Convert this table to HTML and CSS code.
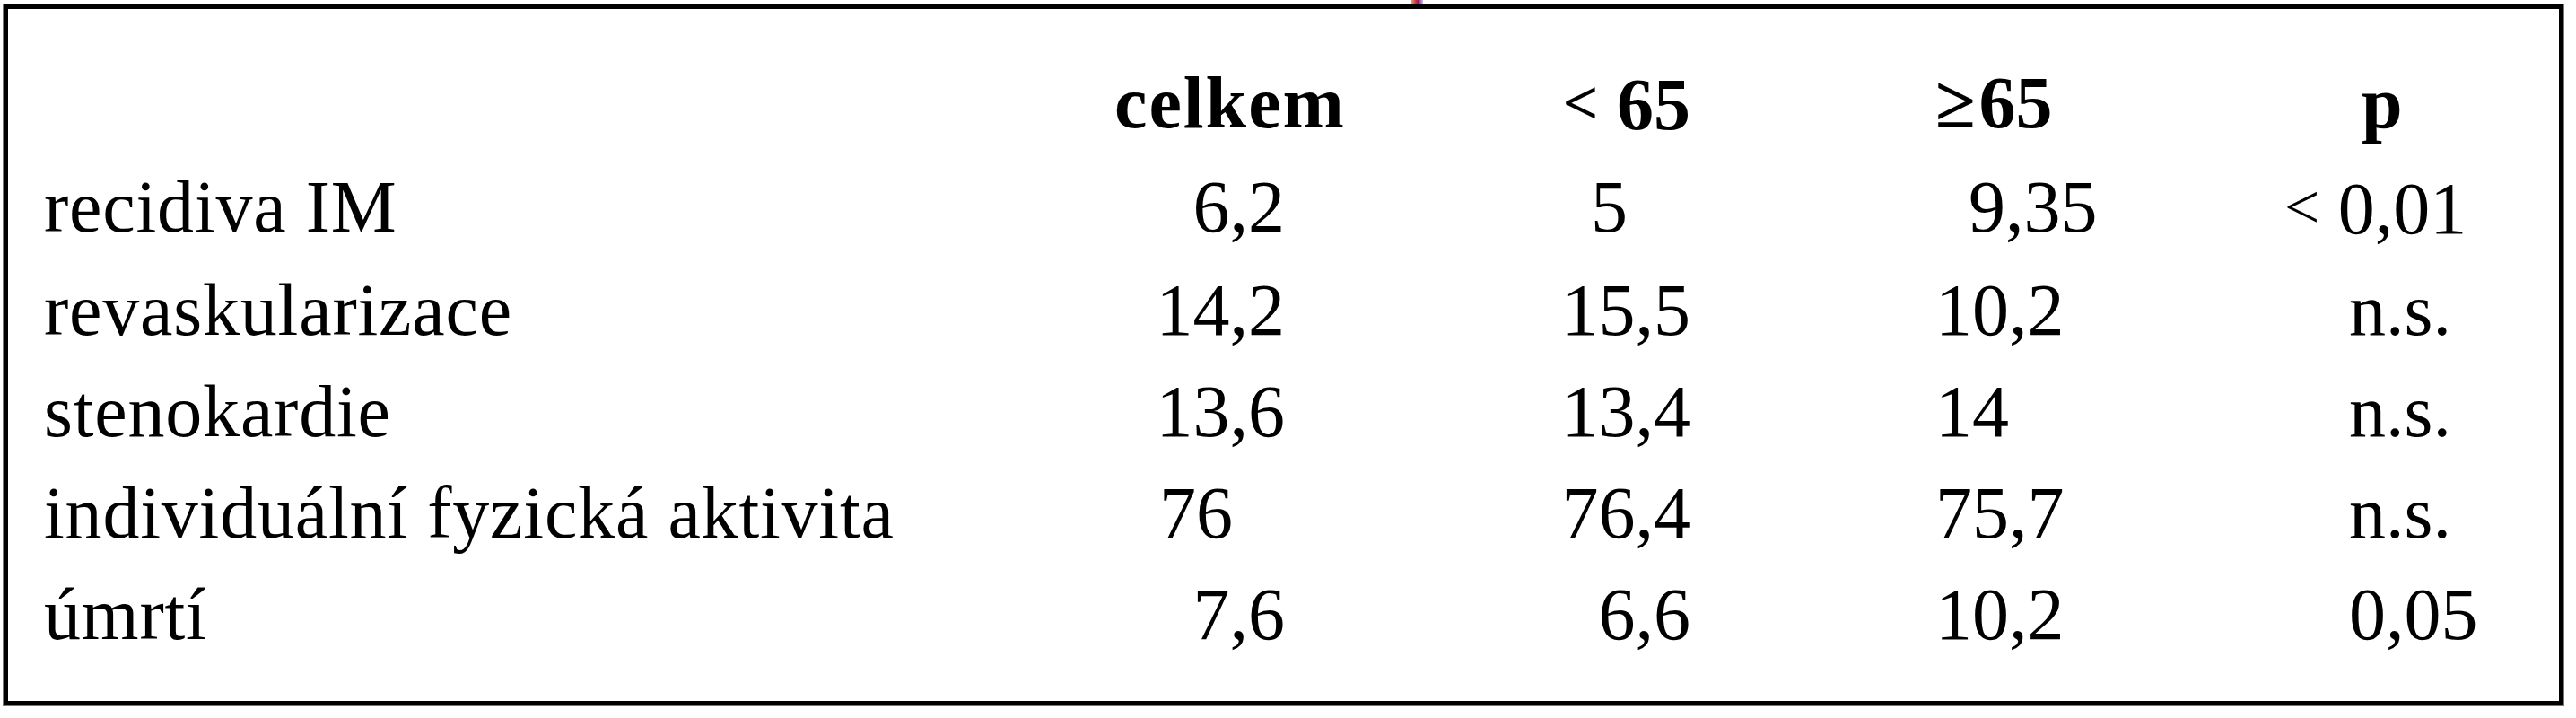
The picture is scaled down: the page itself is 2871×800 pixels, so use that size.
FILE: index.html
```html
<!DOCTYPE html>
<html lang="cs">
<head>
<meta charset="utf-8">
<title>Tabulka</title>
<link rel="stylesheet" href="styles.css">
</head>
<body>
<div class="tick"></div>
<div class="frame">
  <div class="grid">
    <div class="cell hd lab"></div>
    <div class="cell hd c1h">celkem</div>
    <div class="cell hd c2"><span class="lt">&lt;</span> 65</div>
    <div class="cell hd c3 ge">≥ 65</div>
    <div class="cell hd c4h">p</div>

    <div class="cell lab">recidiva IM</div>
    <div class="cell c1">6,2</div>
    <div class="cell c2n">5</div>
    <div class="cell c3w">9,35</div>
    <div class="cell c4w"><span class="lt">&lt;</span> 0,01</div>

    <div class="cell lab">revaskularizace</div>
    <div class="cell c1">14,2</div>
    <div class="cell c2">15,5</div>
    <div class="cell c3">10,2</div>
    <div class="cell c4">n.s.</div>

    <div class="cell lab">stenokardie</div>
    <div class="cell c1">13,6</div>
    <div class="cell c2">13,4</div>
    <div class="cell c3">14</div>
    <div class="cell c4">n.s.</div>

    <div class="cell lab">individuální fyzická aktivita</div>
    <div class="cell c1l">76</div>
    <div class="cell c2">76,4</div>
    <div class="cell c3">75,7</div>
    <div class="cell c4">n.s.</div>

    <div class="cell lab">úmrtí</div>
    <div class="cell c1">7,6</div>
    <div class="cell c2">6,6</div>
    <div class="cell c3">10,2</div>
    <div class="cell c4">0,05</div>
  </div>
</div>
</body>
</html>
```
FILE: styles.css
```css
html, body {
  margin: 0;
  padding: 0;
  background: #ffffff;
}
body {
  position: relative;
  width: 2871px;
  height: 800px;
  overflow: hidden;
  font-family: "Liberation Serif", "Times New Roman", serif;
  color: #000;
}
.tick {
  position: absolute;
  left: 1573px;
  top: 0;
  width: 13px;
  height: 5px;
  background: linear-gradient(to right, #e8a070 0%, #d04a40 30%, #a01060 55%, #9060a0 75%, #c8c0e8 100%);
}
.frame {
  box-sizing: border-box;
  margin: 5px 0 0 4px;
  width: 2853px;
  height: 781px;
  border: 5px solid #000;
  box-shadow: 0 0 0 1px #777;
  padding-top: 47px;
}
.grid {
  display: grid;
  grid-template-columns: 1231px 460px 400px 440px 1fr;
  font-size: 82px;
  line-height: 113px;
  white-space: nowrap;
}
.cell {
  text-align: left;
}
.hd {
  font-weight: bold;
  line-height: 115px;
}
.lab {
  padding-left: 40px;
  letter-spacing: 0.8px;
}
.lt {
  font-size: 0.85em;
  vertical-align: 6px;
}
.ge {
  word-spacing: -17px;
}
.c1 { text-align: right; padding-right: 268px; }
.c1h { padding-left: 2px; letter-spacing: 2px; }
.c1l { padding-left: 52px; }
.c2 { text-align: right; padding-right: 216px; }
.c2n { text-align: right; padding-right: 286px; }
.c3 { padding-left: 57px; }
.c3w { padding-left: 94px; }
.c4 { padding-left: 78px; }
.c4w { padding-left: 6px; }
.c4h { padding-left: 92px; }
```
